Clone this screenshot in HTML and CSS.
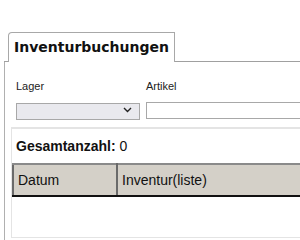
FILE: index.html
```html
<!DOCTYPE html>
<html lang="de">
  <head>
    <meta charset="UTF-8" />
    <title>Inventurbuchungen</title>
    <link rel="stylesheet" href="styles.css">
  </head>
  <body>
    <!-- Tab bar -->
    <div class="tabbar">
      <div class="tab">Inventurbuchungen</div>
    </div>

    <div class="panel">
      <!-- Filter -->
      <div class="filters">
        <div class="field">
          <label for="lager">Lager</label>
          <div class="select-wrap">
            <select id="lager"><option></option></select>
            <svg class="chevron" width="9" height="6" viewBox="0 0 9 6">
              <path d="M1 1 L4.5 4.5 L8 1" fill="none" stroke="#222" stroke-width="1.4" />
            </svg>
          </div>
        </div>
        <div class="field wide">
          <label for="artikel">Artikel</label>
          <input type="text" id="artikel" />
        </div>
      </div>

      <!-- Result list -->
      <div class="result">
        <div class="count"><b>Gesamtanzahl:</b> 0</div>
        <table class="grid">
          <thead>
            <tr>
              <th class="col-date">Datum</th>
              <th>Inventur(liste)</th>
            </tr>
          </thead>
          <tbody></tbody>
        </table>
      </div>
    </div>
  </body>
</html>
```

FILE: styles.css
```css
body {
  margin: 0;
  font-family: "Liberation Sans", Arial, sans-serif;
  background: white;
  overflow: hidden;
}

/* Tab bar */
.tabbar {
  display: flex;
  margin: 32px 0 0 4px;
  padding-left: 4px;
  border-bottom: 1px solid #a0a0a0;
}

.tab {
  font-family: "DejaVu Sans", Verdana, sans-serif;
  font-weight: bold;
  font-size: 14px;
  height: 28px;
  line-height: 29px;
  padding: 0 5px 1px 5px;
  border: 1px solid #a8a8a8;
  border-bottom: none;
  border-radius: 4px 0 0 0;
  background: white;
  margin-bottom: -1px;
  color: #111;
}

/* Panel under the tab */
.panel {
  margin-left: 4px;
  border-left: 1px solid #b0b0b0;
  padding-left: 6px;
  height: 179px;
  overflow: hidden;
}

.filters {
  display: flex;
  gap: 6px;
  padding: 18px 0 0 5px;
}

.field label {
  display: block;
  font-size: 11px;
  color: #222;
  margin-bottom: 9px;
}

.select-wrap {
  position: relative;
  width: 124px;
  height: 17px;
}

.select-wrap select {
  appearance: none;
  width: 124px;
  height: 17px;
  border: 1px solid #a8a8a8;
  border-radius: 0;
  background: #e9e9ee;
  font-size: 11px;
  margin: 0;
}

.chevron {
  position: absolute;
  right: 8px;
  top: 6px;
}

.field.wide {
  flex: 1;
}

.field input {
  width: 200px;
  height: 17px;
  box-sizing: border-box;
  border: 1px solid #a8a8a8;
  border-right: none;
  padding: 0;
  margin: 0;
}

/* Result box */
.result {
  margin-top: 8px;
  border-top: 2px solid #e4e4e4;
  border-left: 1px solid #e4e4e4;
  border-bottom: 1px solid #e4e4e4;
  height: 108px;
}

.count {
  font-size: 14px;
  padding: 9px 0 0 4px;
  height: 25px;
  color: #111;
}

.grid {
  border-collapse: collapse;
  width: 300px;
}

.grid th {
  background: #d4d0c8;
  font-weight: normal;
  font-size: 14px;
  text-align: left;
  color: #111;
  height: 30px;
  padding: 0 5px 0 4px;
  border-top: 2px solid #8a8a8a;
  border-bottom: 2px solid #111;
}

.grid th.col-date {
  width: 93px;
  border-left: 2px solid #6a6a6a;
  border-right: 2px solid #6a6a6a;
}
```
